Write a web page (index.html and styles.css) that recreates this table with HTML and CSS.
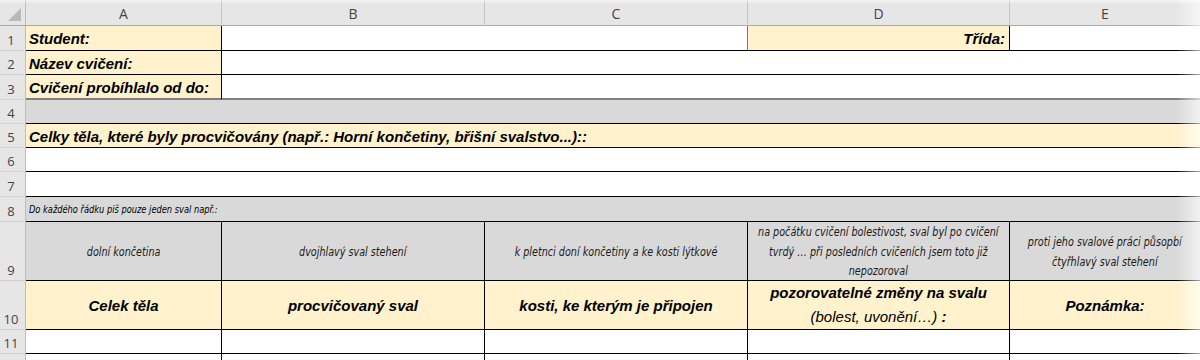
FILE: index.html
```html
<!DOCTYPE html>
<html lang="cs">
<head>
<meta charset="utf-8">
<title>Sešit</title>
<link rel="stylesheet" href="styles.css">
</head>
<body>
<div class="wrap">
  <div class="sheet">
    <div class="corner"><span class="tri"></span></div>
    <div class="ch">A</div>
    <div class="ch">B</div>
    <div class="ch">C</div>
    <div class="ch">D</div>
    <div class="ch last">E</div>

    <div class="rh">1</div>
    <div class="c y lbl"><span>Student:</span></div>
    <div class="c s2 gr"></div>
    <div class="c y lbl right"><span>Třída:</span></div>
    <div class="c nr"></div>

    <div class="rh">2</div>
    <div class="c y lbl"><span>Název cvičení:</span></div>
    <div class="c s4 nr"></div>

    <div class="rh">3</div>
    <div class="c y lbl thick"><span>Cvičení probíhlalo od do:</span></div>
    <div class="c s4 nr thick"></div>

    <div class="rh">4</div>
    <div class="c s5 g nr"></div>

    <div class="rh">5</div>
    <div class="c s5 y nr lbl"><span>Celky těla, které byly procvičovány (např.: Horní končetiny, břišní svalstvo...)::</span></div>

    <div class="rh">6</div>
    <div class="c s5 nr"></div>

    <div class="rh">7</div>
    <div class="c s5 nr"></div>

    <div class="rh">8</div>
    <div class="c s5 g nr note"><span class="t">Do každého řádku piš pouze jeden sval např.:</span></div>

    <div class="rh">9</div>
    <div class="c g ex"><span class="t">dolní končetina</span></div>
    <div class="c g ex"><span class="t">dvojhlavý sval stehení</span></div>
    <div class="c g ex"><span class="t">k pletnci doní končetiny a ke kosti lýtkové</span></div>
    <div class="c g ex"><span class="t">na počátku cvičení bolestivost, sval byl po cvičení<br>tvrdý … při posledních cvičeních jsem toto již<br>nepozoroval</span></div>
    <div class="c g ex nr"><span class="t">proti jeho svalové práci půsopbí<br>čtyřhlavý sval stehení</span></div>

    <div class="rh">10</div>
    <div class="c y hd"><span class="t">Celek těla</span></div>
    <div class="c y hd"><span class="t">procvičovaný sval</span></div>
    <div class="c y hd"><span class="t">kosti, ke kterým je připojen</span></div>
    <div class="c y hd two"><span class="t">pozorovatelné změny na svalu<br><span class="reg">(bolest, uvonění…)</span> :</span></div>
    <div class="c y hd nr"><span class="t">Poznámka:</span></div>

    <div class="rh">11</div>
    <div class="c"></div>
    <div class="c"></div>
    <div class="c"></div>
    <div class="c"></div>
    <div class="c nr"></div>

    <div class="rh">12</div>
    <div class="c"></div>
    <div class="c"></div>
    <div class="c"></div>
    <div class="c"></div>
    <div class="c nr"></div>
  </div>
  <div class="fade-right"></div>
  <div class="fade-top"></div>
</div>
</body>
</html>
```

FILE: styles.css
```css
* { box-sizing: border-box; }
html, body { margin: 0; padding: 0; background: #fff; }
body { width: 1200px; height: 360px; overflow: hidden; }

.wrap { position: relative; width: 1200px; height: 360px; overflow: hidden; }

.sheet {
  display: grid;
  grid-template-columns: 26px 196px 263px 263px 262px 190px;
  grid-template-rows: 26px 25px 24px 25px 24px 24px 24px 25px 25px 59px 49px 24px 24px;
  font-family: "Liberation Sans", Arial, sans-serif;
  color: #000;
}

.corner {
  background: #e6e6e6;
  border-right: 1px solid #bdbdbd;
  border-bottom: 1px solid #a9a9a9;
  position: relative;
}
.tri {
  position: absolute;
  right: 4px;
  bottom: 4px;
  width: 0;
  height: 0;
  border-left: 13px solid transparent;
  border-bottom: 13px solid #b9b9b9;
}

.ch {
  background: #e6e6e6;
  border-right: 1px solid #c4c4c4;
  border-bottom: 1px solid #a9a9a9;
  font-family: "Open Sans", "Noto Sans", sans-serif;
  font-size: 14px;
  color: #444;
  display: flex;
  align-items: center;
  justify-content: center;
  padding-top: 2px;
}
.ch.last { border-right: none; }

.rh {
  background: #e6e6e6;
  border-right: 1px solid #bdbdbd;
  border-bottom: 1px solid #d0d0d0;
  font-family: "Open Sans", "Noto Sans", sans-serif;
  font-size: 13px;
  color: #444;
  display: flex;
  align-items: flex-end;
  justify-content: center;
  padding-bottom: 1px;
  padding-right: 3px;
}

.c {
  background: #fff;
  border-right: 1px solid #000;
  border-bottom: 1px solid #000;
  display: flex;
  align-items: center;
  min-width: 0;
  white-space: nowrap;
  overflow: hidden;
}
.c.nr { border-right: none; }
.c.gr { border-right-color: #7a7a7a; }
.c.thick { border-bottom: 2px solid #7f7f7f; }

.s2 { grid-column: span 2; }
.s4 { grid-column: span 4; }
.s5 { grid-column: span 5; }

.y { background: #fff2cc; }
.g { background: #d9d9d9; }

.lbl {
  font-size: 15px;
  font-weight: bold;
  font-style: italic;
  padding-left: 3px;
  padding-top: 1px;
}
.lbl.right { justify-content: flex-end; padding-right: 4px; }

.note {
  font-family: "Liberation Sans Narrow", "DejaVu Sans Condensed", sans-serif;
  font-style: italic;
  font-size: 10px;
  padding-left: 3px;
}
.note .t {
  display: inline-block;
  transform: scaleX(0.92);
  transform-origin: left center;
}

.ex {
  font-family: "Liberation Sans Narrow", "DejaVu Sans Condensed", sans-serif;
  font-style: italic;
  font-size: 11.5px;
  line-height: 19.5px;
  color: #1a1a1a;
  justify-content: center;
  text-align: center;
  padding-top: 3px;
}
.ex .t {
  display: block;
  transform: scaleX(0.93);
  transform-origin: center center;
}

.hd {
  font-size: 15px;
  font-weight: bold;
  font-style: italic;
  justify-content: center;
  text-align: center;
}
.hd .t { display: block; }
.hd.two { line-height: 24px; padding-bottom: 1px; }
.hd .reg { font-weight: normal; }

.fade-right {
  position: absolute;
  top: 0;
  right: 0;
  width: 24px;
  height: 360px;
  background: linear-gradient(to right, rgba(255,255,255,0), rgba(255,255,255,0.65));
  pointer-events: none;
}
.fade-top {
  position: absolute;
  top: 0;
  left: 0;
  width: 1200px;
  height: 4px;
  background: linear-gradient(to bottom, rgba(255,255,255,0.6), rgba(255,255,255,0));
  pointer-events: none;
}
```
